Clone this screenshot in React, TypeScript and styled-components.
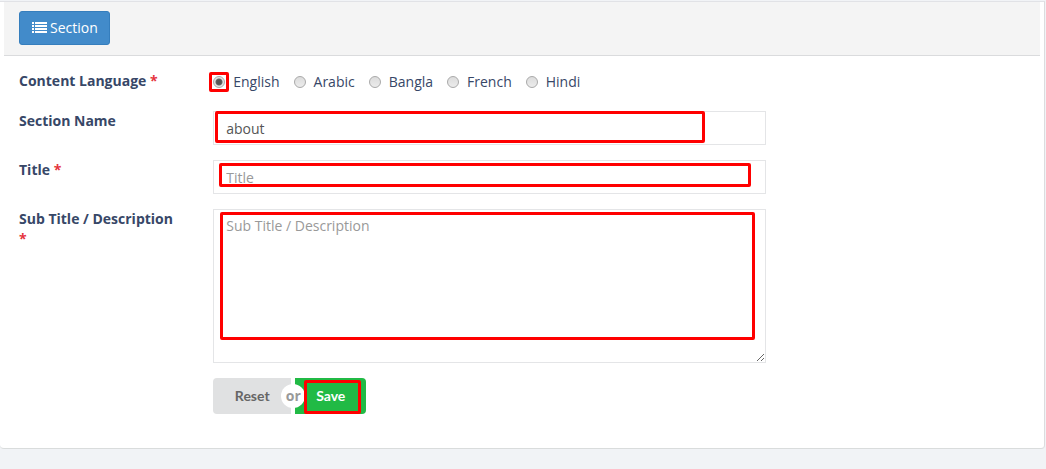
import React from 'react';
import styled, { createGlobalStyle } from 'styled-components';

const GlobalStyle = createGlobalStyle`
  *, *::before, *::after { box-sizing: border-box; }
  body {
    margin: 0;
    background: #f1f3f6;
    color: #374767;
    font: 14px/20px "Open Sans", "Liberation Sans", sans-serif;
  }
  button, input, textarea { font: inherit; }
`;

const Page = styled.main`
  padding: 1px 1px 20px 0;
`;

const Panel = styled.section`
  padding: 0 4px 34px;
  background: #fff;
  border: 1px solid #e1e2e6;
  border-left: 0;
  border-bottom-color: #d9dcdc;
  border-right-color: #dcdcde;
  border-radius: 0 0 4px 4px;
`;

const PanelHeading = styled.header`
  padding: 9px 15px 10px;
  background: #f4f4f4;
  border-bottom: 1px solid #dadbdd;
`;

const SectionButton = styled.button`
  display: flex;
  align-items: center;
  gap: 3px;
  height: 34px;
  padding: 0 11px 0 12px;
  color: #fff;
  background: #428bca;
  border: 1px solid #357ebd;
  border-radius: 3px;
`;

const Form = styled.form`
  display: flex;
  flex-direction: column;
  gap: 15px;
  width: 75%;
  padding-top: 15px;
`;

const Row = styled.div`
  display: grid;
  grid-template-columns: minmax(0, 3fr) minmax(0, 9fr);

  & > * { margin: 0 15px; }
`;

const FieldLabel = styled.label`
  font-weight: 700;
`;

const Star = styled.span`
  color: #e5343d;
`;

const Control = styled.div`
  position: relative;
  grid-column: 2;
`;

const TextInput = styled.input`
  display: block;
  width: 100%;
  height: 34px;
  padding: 6px 12px;
  color: #555;
  background: #fff;
  border: 1px solid #e4e5e7;
  border-radius: 0;
  outline: 0;

  &::placeholder { color: #999; opacity: 1; }
`;

const TextArea = styled(TextInput).attrs({ as: 'textarea' })`
  height: 154px;
  resize: vertical;
`;

const Options = styled.div`
  display: flex;
  gap: 14px;
  height: 25px;
  grid-column: 2;
`;

const Option = styled.label`
  display: flex;
  align-items: center;
  gap: 8px;
  height: 22px;
`;

const RadioBox = styled.span`
  position: relative;
  display: flex;
`;

const Radio = styled.input`
  appearance: none;
  width: 12px;
  height: 12px;
  margin: 0;
  border: 1px solid #a9a9a9;
  border-radius: 50%;
  background: linear-gradient(#dcdcdc, #ececec);

  &:checked {
    background: radial-gradient(circle, #555 0 2px, #666 3px, #e4e4e4 4px);
  }
`;

const Highlight = styled.span<{ $inset: string }>`
  position: absolute;
  z-index: 2;
  inset: ${(p) => p.$inset};
  border: 3px solid #f00;
  border-radius: 2px;
  pointer-events: none;
`;

const ButtonGroup = styled.div`
  display: flex;
  grid-column: 2;
  font-family: Lato, "Open Sans", sans-serif;
  font-weight: 700;
`;

const ActionButton = styled.button<{ $primary?: boolean }>`
  position: relative;
  min-width: ${(p) => (p.$primary ? '71px' : '78px')};
  height: 36px;
  padding: 0 20px;
  border: 0;
  border-radius: ${(p) => (p.$primary ? '0 4px 4px 0' : '4px 0 0 4px')};
  color: ${(p) => (p.$primary ? '#fff' : '#666')};
  background: ${(p) => (p.$primary ? '#21ba45' : '#e0e1e2')};
`;

const Or = styled.span`
  position: relative;
  z-index: 1;
  display: flex;
  align-items: center;
  width: 4px;

  span {
    flex: none;
    width: 24px;
    height: 24px;
    margin-left: -10px;
    border-radius: 50%;
    background: #fff;
    color: #999;
    text-align: center;
    line-height: 24px;
    font-family: "Open Sans", sans-serif;
    font-weight: 700;
  }
`;

const ListIcon = () => (
  <svg width="15" height="12" viewBox="0 0 15 12" fill="#fff" aria-hidden="true" shapeRendering="crispEdges">
    {[0, 3, 6, 9].map((y) => (
      <React.Fragment key={y}>
        <rect x="0" y={y} width="2" height="2" />
        <rect x="3" y={y} width="12" height="2" />
      </React.Fragment>
    ))}
  </svg>
);

const languages = ['English', 'Arabic', 'Bangla', 'French', 'Hindi'];

export default function App() {
  return (
    <>
      <GlobalStyle />
      <Page>
        <Panel>
          <PanelHeading>
            <SectionButton type="button"><ListIcon />Section</SectionButton>
          </PanelHeading>
          <Form onSubmit={(e) => e.preventDefault()}>
            <Row role="radiogroup" aria-labelledby="language-label">
              <FieldLabel as="span" id="language-label">Content Language <Star>*</Star></FieldLabel>
              <Options>
                {languages.map((name, i) => (
                  <Option key={name}>
                    <RadioBox>
                      <Radio type="radio" name="language" value={name} defaultChecked={i === 0} />
                      {i === 0 && <Highlight $inset="-4px" />}
                    </RadioBox>
                    {name}
                  </Option>
                ))}
              </Options>
            </Row>
            <Row>
              <FieldLabel htmlFor="name">Section Name</FieldLabel>
              <Control>
                <TextInput id="name" defaultValue="about" />
                <Highlight $inset="0 61px 2px 2px" />
              </Control>
            </Row>
            <Row>
              <FieldLabel htmlFor="title">Title <Star>*</Star></FieldLabel>
              <Control>
                <TextInput id="title" placeholder="Title" />
                <Highlight $inset="3px 15px 7px 6px" />
              </Control>
            </Row>
            <Row>
              <FieldLabel htmlFor="description">Sub Title / Description <Star>*</Star></FieldLabel>
              <Control>
                <TextArea id="description" placeholder="Sub Title / Description" />
                <Highlight $inset="3px 11px 23px 7px" />
              </Control>
            </Row>
            <Row>
              <ButtonGroup>
                <ActionButton type="reset">Reset</ActionButton>
                <Or><span>or</span></Or>
                <ActionButton type="submit" $primary>
                  Save
                  <Highlight $inset="2px 5px 0 9px" />
                </ActionButton>
              </ButtonGroup>
            </Row>
          </Form>
        </Panel>
      </Page>
    </>
  );
}
